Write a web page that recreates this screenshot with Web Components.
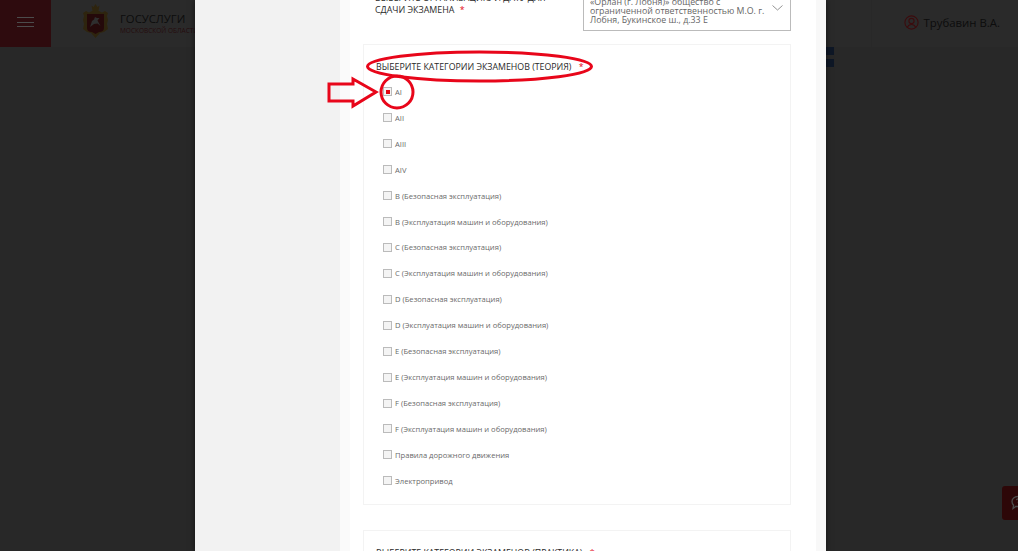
<!DOCTYPE html>
<html lang="ru">
<head>
<meta charset="utf-8">
<title>Госуслуги</title>
<style>
  html, body { margin: 0; height: 100%; overflow: hidden; background: #888; }
  body { font-family: "Open Sans", "Liberation Sans", sans-serif; }
</style>
</head>
<body>
<app-page>
  <site-header slot="header"></site-header>
  <exam-modal slot="modal">
    <exam-place></exam-place>
    <exam-card title-text="Выберите категории экзаменов (теория)" marked>
      <exam-check label="AI" checked></exam-check>
      <exam-check label="AII"></exam-check>
      <exam-check label="AIII"></exam-check>
      <exam-check label="AIV"></exam-check>
      <exam-check label="B (Безопасная эксплуатация)"></exam-check>
      <exam-check label="B (Эксплуатация машин и оборудования)"></exam-check>
      <exam-check label="C (Безопасная эксплуатация)"></exam-check>
      <exam-check label="C (Эксплуатация машин и оборудования)"></exam-check>
      <exam-check label="D (Безопасная эксплуатация)"></exam-check>
      <exam-check label="D (Эксплуатация машин и оборудования)"></exam-check>
      <exam-check label="E (Безопасная эксплуатация)"></exam-check>
      <exam-check label="E (Эксплуатация машин и оборудования)"></exam-check>
      <exam-check label="F (Безопасная эксплуатация)"></exam-check>
      <exam-check label="F (Эксплуатация машин и оборудования)"></exam-check>
      <exam-check label="Правила дорожного движения"></exam-check>
      <exam-check label="Электропривод"></exam-check>
    </exam-card>
    <exam-card title-text="Выберите категории экзаменов (практика)"></exam-card>
  </exam-modal>
</app-page>
<script>
// --- Web Component: AppPage ---
class AppPage extends HTMLElement {
  constructor() {
    super();
    this.attachShadow({ mode: 'open' });
    this.shadowRoot.innerHTML = `
      <style>
        :host { display: block; position: relative; width: 100%; height: 100vh; overflow: hidden; }
        .peek { display: flex; flex-direction: column; gap: 4px; margin-left: 800px; width: 34px; }
        .peek i { display: block; height: 8px; background: #2f4f80; }
        .overlay { position: absolute; inset: 0; background: rgba(0, 0, 0, .7); }
        .help { position: absolute; right: 0; top: 486px; width: 16px; height: 34px; overflow: hidden;
                background: #971a1b; border-radius: 3px 0 0 3px; }
        .help svg { display: block; margin: 9px 0 0 8px; }
        .modal-wrap { position: absolute; top: 0; bottom: 0; left: 195px; width: 631px; }
      </style>
      <slot name="header"></slot>
      <div class="peek"><i></i><i></i></div>
      <div class="help">
        <svg width="16" height="16" viewBox="0 0 16 16" fill="none" stroke="#fff" stroke-width="1.300">
          <path d="M8 1.500c3.600 0 6 2.200 6 5s-2.400 5-6 5c-.7 0-1.300-.1-1.900-.2L3 13.500l.6-3.200C2.600 9.300 2 8 2 6.500c0-2.800 2.400-5 6-5z"/>
          <path d="M6.500 5.200c.2-.9.9-1.300 1.600-1.300 1 0 1.600.6 1.600 1.300 0 1.100-1.500 1.200-1.500 2.500"/>
        </svg>
      </div>
      <div class="overlay"></div>
      <div class="modal-wrap"><slot name="modal"></slot></div>
    `;
  }
}
customElements.define('app-page', AppPage);

// --- Web Component: SiteHeader ---
class SiteHeader extends HTMLElement {
  constructor() {
    super();
    this.attachShadow({ mode: 'open' });
    this.shadowRoot.innerHTML = `
      <style>
        :host { display: block; }
        .bar { display: flex; align-items: stretch; height: 47px; background: #8e8e8e; }
        .burger { width: 51px; background: #9c2530; display: flex; flex-direction: column; box-sizing: border-box;
                  justify-content: center; align-items: center; gap: 3.700px; padding-bottom: 3px; }
        .burger i { display: block; width: 17px; height: 1px; background: #fff; }
        .brand { display: flex; align-items: flex-start; margin-left: 31px; gap: 11px; padding-top: 3px; }
        .brand b { display: block; font-weight: 400; font-size: 11.300px; line-height: 14px; color: #2c2c2c; margin-top: 9px; }
        .brand small { display: block; font-size: 6.500px; line-height: 9px; color: #7a2a30; white-space: nowrap; }
        .spacer { flex: 1; }
        .side { display: flex; align-items: center; }
        .more { width: 50px; height: 100%; border-right: 1px solid #858585; display: flex; align-items: center; }
        .more svg { display: block; margin-bottom: 3px; }
        .user { display: flex; align-items: center; gap: 4px; padding: 0 18px 3px 32px; font-size: 11.400px; color: #2c2c2c; }
      </style>
      <div class="bar">
        <div class="burger"><i></i><i></i><i></i></div>
        <div class="brand">
          <svg width="27" height="36" viewBox="0 0 27 36">
            <path d="M9.500 2.500 L11.500 4 L13.500 1 L15.500 4 L17.500 2.500 L16.500 8 H10.500 Z" fill="#9a7a30"/>
            <path d="M1 10 L4 8 L7 9.500 L10 8 H17 L20 9.500 L23 8 L26 10 L25 13 L26 17 L25 21 L26 26 L22 29 L18 30 L13.500 35 L9 30 L5 29 L1 26 L2 21 L1 17 L2 13 Z" fill="#9a7a30"/>
            <path d="M5 11 H22 V25 Q22 29 17 29 L13.500 31 L10 29 Q5 29 5 25 Z" fill="#7a1f22"/>
            <path d="M8 24 L10 18 L12 16.500 L13 14 L15 15 L17.500 15 L15.500 17.500 L18.500 23 L15.500 20.500 L12 21 Z" fill="#999"/>
          </svg>
          <div><b>ГОСУСЛУГИ</b><small>МОСКОВСКОЙ ОБЛАСТИ</small></div>
        </div>
        <div class="spacer"></div>
        <div class="side">
          <div class="more">
            <svg width="6" height="8" viewBox="0 0 6 8" fill="none" stroke="#222" stroke-width="1.200"><path d="M1 .5 4.500 4 1 7.500"/></svg>
          </div>
          <div class="user">
            <svg width="15" height="15" viewBox="0 0 15 15" fill="none" stroke="#c4262c" stroke-width="1.100">
              <circle cx="7.500" cy="7.500" r="6.600"/><circle cx="7.500" cy="6" r="2.600"/>
              <path d="M3.200 12.500c.8-2 2.400-3 4.300-3s3.500 1 4.300 3"/>
            </svg>
            <span>Трубавин В.А.</span>
          </div>
        </div>
      </div>
      <slot></slot>
    `;
  }
}
customElements.define('site-header', SiteHeader);

// --- Web Component: ExamModal ---
class ExamModal extends HTMLElement {
  constructor() {
    super();
    this.attachShadow({ mode: 'open' });
    this.shadowRoot.innerHTML = `
      <style>
        :host { display: block; height: 100%; overflow: hidden; background: #f2f2f2;
                box-shadow: 0 0 6px rgba(0, 0, 0, .6); }
        .sheet { margin: -16px 0 0 145px; height: 700px; background: #fff; padding: 0 25px 0 13px;
                 border-left: 10px solid #fafafa; border-right: 10px solid #f8f8f8; box-sizing: border-box; }
      </style>
      <div class="sheet"><slot></slot></div>
    `;
  }
}
customElements.define('exam-modal', ExamModal);

// --- Web Component: ExamPlace ---
class ExamPlace extends HTMLElement {
  constructor() {
    super();
    this.attachShadow({ mode: 'open' });
    this.shadowRoot.innerHTML = `
      <style>
        :host { display: block; height: 60px; }
        .row { display: flex; }
        .label { width: 220px; padding: 8px 0 0 12px; box-sizing: border-box; font-size: 8.900px; line-height: 12px;
                 color: #2a2a2a; }
        .label em { color: #e30613; font-style: normal; margin-left: 3px; }
        .select { flex: 1; height: 47px; box-sizing: border-box; border: 1px solid #bbb; padding: 3px 6px;
                  display: flex; align-items: flex-end; gap: 6px; font-size: 8.800px; line-height: 9px; color: #666; }
        .select span { flex: 1; padding-bottom: 2px; white-space: nowrap; }
        .select svg { display: block; margin: 0 1px 16px 0; }
      </style>
      <div class="row">
        <div class="label">ВЫБЕРИТЕ ОРГАНИЗАЦИЮ И ДАТУ ДЛЯ<br>СДАЧИ ЭКЗАМЕНА <em>*</em></div>
        <div class="select">
          <span>«Орлан (г. Лобня)» общество с<br>ограниченной ответственностью М.О. г.<br>Лобня, Букинское ш., д.33 Е</span>
          <svg width="11" height="6" viewBox="0 0 11 6" fill="none" stroke="#888" stroke-width=".9"><path d="M.5.5 5.500 5 10.500.5"/></svg>
        </div>
      </div>
    `;
  }
}
customElements.define('exam-place', ExamPlace);

// --- Web Component: ExamCard ---
class ExamCard extends HTMLElement {
  constructor() {
    super();
    this.attachShadow({ mode: 'open' });
    const marked = this.hasAttribute('marked');
    this.shadowRoot.innerHTML = `
      <style>
        :host { display: block; position: relative; border: 1px solid #f3f3f3; margin-bottom: 25px;
                padding: 16px 12px 10px; box-sizing: border-box; }
        h3 { margin: 0 0 5px; font-size: 8.800px; line-height: 13px; font-weight: 400; color: #2a2a2a; text-transform: uppercase; }
        h3 em { color: #e30613; font-style: normal; margin-left: 5px; }
        svg.mark { position: absolute; left: -37px; top: 2px; overflow: visible; }
      </style>
      <h3>${this.getAttribute('title-text')} <em>*</em></h3>
      <slot></slot>
      ${marked ? `
      <svg class="mark" width="270" height="70" viewBox="0 0 270 70" fill="none" stroke="#e8061a" stroke-width="3">
        <ellipse cx="152.500" cy="19.500" rx="112" ry="14.500"/>
        <circle cx="70" cy="45" r="16"/>
        <path d="M2 37 H26 V32 L49 45 L26 59 V54 H2 Z"/>
      </svg>` : ''}
    `;
  }
}
customElements.define('exam-card', ExamCard);

// --- Web Component: ExamCheck ---
class ExamCheck extends HTMLElement {
  constructor() {
    super();
    this.attachShadow({ mode: 'open' });
    const checked = this.hasAttribute('checked');
    this.shadowRoot.innerHTML = `
      <style>
        :host { display: flex; align-items: center; gap: 3px; height: 25.930px; margin-left: 7px;
                font-size: 7.600px; color: #6a6a6a; white-space: nowrap; }
        .box { width: 7px; height: 7px; border: 1px solid #bbb; background: #f4f4f4; display: flex;
               align-items: center; justify-content: center; flex: none; }
        .box i { display: block; width: 4px; height: 4px; background: #e30613; }
      </style>
      <span class="box">${checked ? '<i></i>' : ''}</span><span>${this.getAttribute('label')}</span>
    `;
  }
}
customElements.define('exam-check', ExamCheck);
</script>
</body>
</html>
